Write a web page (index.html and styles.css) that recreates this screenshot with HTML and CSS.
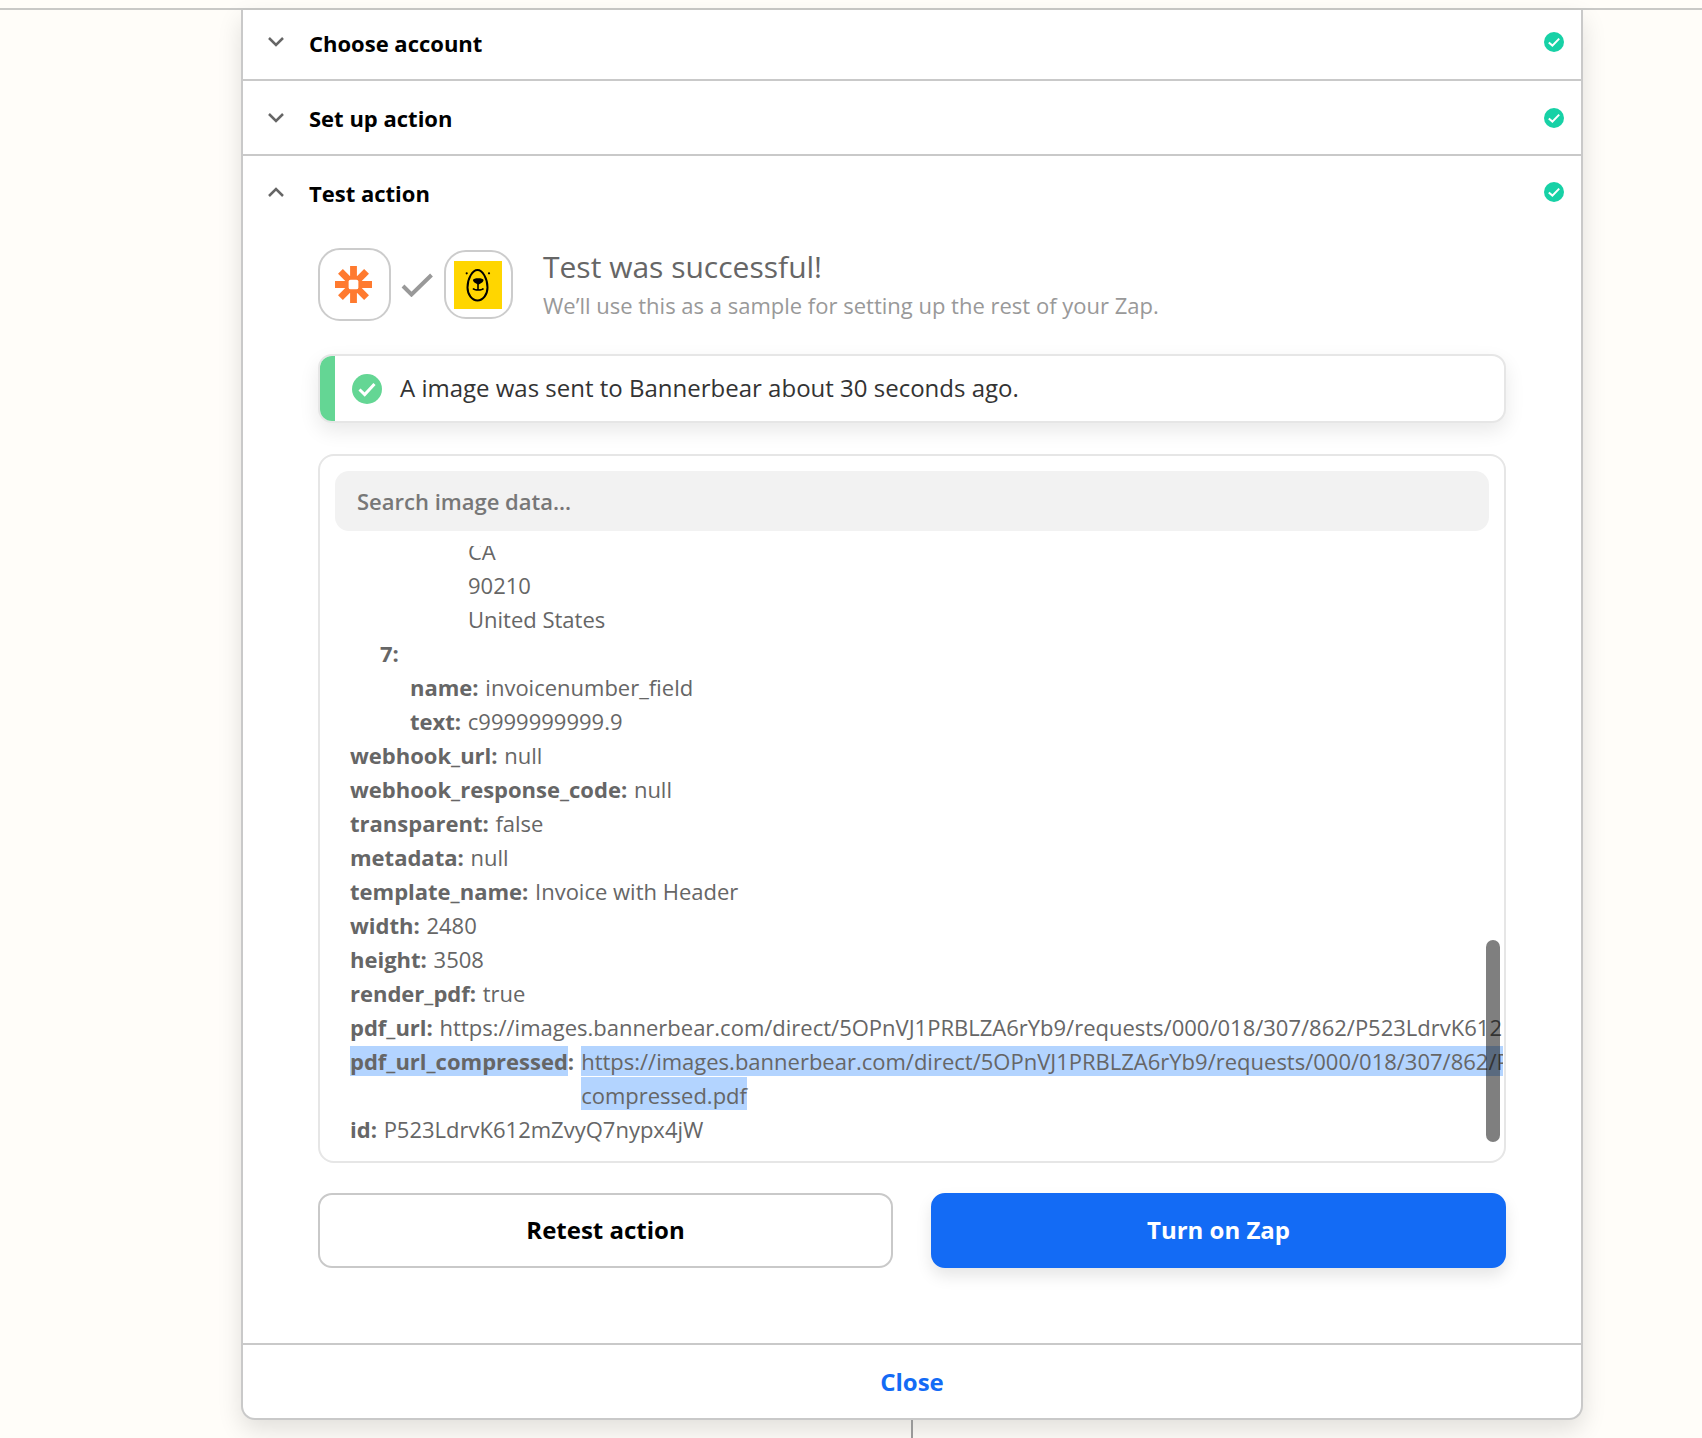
FILE: index.html
```html
<!DOCTYPE html>
<html lang="en">
<head>
<meta charset="utf-8">
<title>Test action</title>
<link rel="stylesheet" href="styles.css">
</head>
<body>
<div class="topbar"></div>
<div class="stem"></div>
<main class="panel">
  <header class="step step-first">
    <svg class="chev" viewBox="0 0 18 12"><path d="M2 2l7 7 7-7"/></svg>
    <h2 class="step-title">Choose account</h2>
    <svg class="ok" viewBox="0 0 20 20"><circle cx="10" cy="10" r="10"/><path d="M4.800 10.400l3.600 3.200 6.800-7"/></svg>
  </header>
  <header class="step step-second">
    <svg class="chev" viewBox="0 0 18 12"><path d="M2 2l7 7 7-7"/></svg>
    <h2 class="step-title">Set up action</h2>
    <svg class="ok" viewBox="0 0 20 20"><circle cx="10" cy="10" r="10"/><path d="M4.800 10.400l3.600 3.200 6.800-7"/></svg>
  </header>
  <section class="open-step">
    <div class="step step-open">
      <svg class="chev" viewBox="0 0 18 12"><path d="M2 10l7-7 7 7"/></svg>
      <h2 class="step-title">Test action</h2>
      <svg class="ok" viewBox="0 0 20 20"><circle cx="10" cy="10" r="10"/><path d="M4.800 10.400l3.600 3.200 6.800-7"/></svg>
    </div>
    <div class="content">
      <div class="summary">
        <div class="tile tile-zap">
          <svg class="zap" viewBox="0 0 38 38">
            <path d="M19 0v38M0 19h38M5.600 5.600l26.800 26.800M32.400 5.600L5.600 32.400"/>
            <rect x="14" y="14" width="10" height="10" rx="2"/>
          </svg>
        </div>
        <svg class="link-check" viewBox="0 0 32 24"><path d="M2 13l8.500 8.500L30.500 2"/></svg>
        <div class="tile tile-bear">
          <svg class="bear" viewBox="0 0 48 48">
            <rect width="48" height="48"/>
            <path class="bear-line" d="M23.500 9c-5 0-10 8.500-10 17.500 0 7 4.500 13 10 13s10-6 10-13c0-9-5-17.500-10-17.500z"/>
            <path class="bear-fill" d="M19 19c0-2.200 10.500-2.200 10.500 0 0 2.200-3 3.800-5.200 4.500-2.100-.7-5.300-2.300-5.300-4.500z"/>
            <path class="bear-thin" d="M24 23v5.500M19 27.500c1.500 2 9 2 10.500 0"/>
            <circle class="bear-fill" cx="12.700" cy="12.300" r="1.100"/>
            <circle class="bear-fill" cx="35" cy="12.300" r="1.100"/>
          </svg>
        </div>
        <div class="summary-text">
          <h3 class="summary-title">Test was successful!</h3>
          <p class="summary-sub">We’ll use this as a sample for setting up the rest of your Zap.</p>
        </div>
      </div>

      <div class="alert">
        <span class="alert-bar"></span>
        <svg class="alert-icon" viewBox="0 0 30 30"><circle cx="15" cy="15" r="15"/><path d="M7.500 15.500l5.200 5L22.500 10"/></svg>
        <span class="alert-text">A image was sent to Bannerbear about 30 seconds ago.</span>
      </div>

      <div class="data-box">
        <div class="search">Search image data...</div>
        <div class="tree-clip">
          <div class="tree">
            <div class="row ind-3">CA</div>
            <div class="row ind-3">90210</div>
            <div class="row ind-3">United States</div>
            <div class="row ind-1"><b>7:</b></div>
            <div class="row ind-2"><b>name:</b> invoicenumber_field</div>
            <div class="row ind-2"><b>text:</b> c9999999999.9</div>
            <div class="row"><b>webhook_url:</b> null</div>
            <div class="row"><b>webhook_response_code:</b> null</div>
            <div class="row"><b>transparent:</b> false</div>
            <div class="row"><b>metadata:</b> null</div>
            <div class="row"><b>template_name:</b> Invoice with Header</div>
            <div class="row"><b>width:</b> 2480</div>
            <div class="row"><b>height:</b> 3508</div>
            <div class="row"><b>render_pdf:</b> true</div>
            <div class="row"><b>pdf_url:</b> https://images.bannerbear.com/direct/5OPnVJ1PRBLZA6rYb9/requests/000/018/307/862/P523LdrvK612mZvyQ7nypx4jW/original.pdf</div>
            <div class="row row-split">
              <b class="key-sel"><span class="sel">pdf_url_compressed</span>:</b>
              <div class="value">
                <div class="line"><span class="sel">https://images.bannerbear.com/direct/5OPnVJ1PRBLZA6rYb9/requests/000/018/307/862/P523LdrvK612mZvyQ7nypx4jW/</span></div>
                <div class="line"><span class="sel sel-tail">compressed.pdf</span></div>
              </div>
            </div>
            <div class="row"><b>id:</b> P523LdrvK612mZvyQ7nypx4jW</div>
          </div>
          <div class="thumb"></div>
        </div>
      </div>

      <div class="actions">
        <button class="btn btn-ghost">Retest action</button>
        <button class="btn btn-primary">Turn on Zap</button>
      </div>
    </div>
  </section>
  <footer class="foot"><a class="close">Close</a></footer>
</main>
</body>
</html>
```

FILE: styles.css
```css
* { box-sizing: border-box; }
html, body { margin: 0; height: 1438px; overflow: hidden; }
body {
  background: #fffdf9;
  font-family: "Open Sans", "Noto Sans", sans-serif;
  font-size: 22px;
  line-height: 34px;
  color: #666;
  position: relative;
}
h2, h3, p { margin: 0; }

.topbar { height: 10px; border-bottom: 2px solid #c9c9c7; }
.stem { position: absolute; z-index: 1; left: 911px; top: 1420px; width: 2px; height: 18px; background: #999; }

.panel {
  width: 1342px;
  height: 1410px;
  margin-left: 241px;
  display: flex;
  flex-direction: column;
  background: #fff;
  border: 2px solid #c9c9c9;
  border-top: 0;
  border-radius: 0 0 14px 14px;
  box-shadow: 0 10px 24px rgba(0, 0, 0, .12);
  position: relative;
}

.step {
  display: flex;
  align-items: flex-start;
  padding: 20px 17px 19px 24px;
  border-bottom: 2px solid #c9c9c9;
}
.step-first { padding-top: 16px; padding-bottom: 19px; }
.step-open { border-bottom: 0; padding-bottom: 0; }
.chev { width: 18px; height: 12px; margin-top: 10px; margin-right: 24px; fill: none; stroke: #666; stroke-width: 2.500; }
.step-title { flex: 1; font-size: 22px; line-height: 34px; font-weight: 700; color: #000; }
.ok { width: 20px; height: 20px; margin-top: 6px; }
.step-second .chev { margin-top: 11px; }
.step-second .ok { margin-top: 7px; }
.ok circle { fill: #17d1a6; }
.ok path { fill: none; stroke: #fff; stroke-width: 2; }

.open-step { flex: 1; display: flex; flex-direction: column; }
.content { flex: 1; padding: 38px 75px 0; }

.summary { display: flex; align-items: center; height: 73px; }
.tile { display: flex; align-items: center; justify-content: center; background: #fff; border: 2px solid #ccc; }
.tile-zap { width: 73px; height: 73px; border-radius: 22px; }
.tile-bear { width: 69px; height: 69px; border-radius: 22px; }
.zap { width: 37px; height: 37px; margin-right: 2px; }
.zap path { fill: none; stroke: #ff7a2f; stroke-width: 7; }
.zap rect { fill: #fff; }
.link-check { width: 32px; height: 24px; margin: 0 11px 0 10px; fill: none; stroke: #999; stroke-width: 4; }
.bear { width: 48px; height: 48px; margin-right: 2px; }
.bear rect { fill: #ffd600; }
.bear-line { fill: none; stroke: #000; stroke-width: 2; }
.bear-thin { fill: none; stroke: #000; stroke-width: 1.600; }
.bear-fill { fill: #000; }
.summary-text { margin-left: 30px; }
.summary-title { font-size: 30px; line-height: 40px; font-weight: 400; color: #666; margin-top: -1px; }
.summary-sub { font-size: 22px; line-height: 34px; color: #999; margin-top: 1px; }

.alert {
  display: flex;
  align-items: center;
  height: 69px;
  margin-top: 33px;
  background: #fff;
  border: 2px solid #e6e6e6;
  border-radius: 14px;
  box-shadow: 0 8px 20px rgba(0, 0, 0, .09);
}
.alert-bar { align-self: stretch; width: 15px; margin-right: 17px; background: #64d694; border-radius: 12px 0 0 12px; }
.alert-icon { width: 30px; height: 30px; margin-right: 18px; }
.alert-icon circle { fill: #64d694; }
.alert-icon path { fill: none; stroke: #fff; stroke-width: 3; }
.alert-text { font-size: 24px; color: #333; margin-top: -2px; }

.data-box {
  height: 709px;
  margin-top: 31px;
  padding: 15px 15px 0;
  border: 2px solid #e6e6e6;
  border-radius: 16px;
}
.search {
  height: 60px;
  padding-left: 22px;
  background: #f2f2f2;
  border-radius: 14px;
  font-size: 22px;
  font-weight: 600;
  line-height: 60px;
  color: #777;
}
.tree-clip {
  position: relative;
  height: 601px;
  width: 1183px;
  margin-top: 15px;
  margin-left: -15px;
  overflow: hidden;
}
.tree { margin-top: -12px; padding-left: 30px; }
.row { white-space: nowrap; }
.ind-1 { padding-left: 30px; }
.ind-2 { padding-left: 60px; }
.ind-3 { padding-left: 118px; }
b { font-weight: 700; margin-right: 1px; }
.row-split { display: flex; align-items: flex-start; gap: 7px; }
.key-sel { margin-right: 0; }
.sel { background: #b3d4ff; }
.sel-tail { padding-top: 3px; }
.thumb {
  position: absolute;
  right: 3px;
  top: 394px;
  width: 14px;
  height: 202px;
  background: rgba(0, 0, 0, .5);
  border-radius: 7px;
}

.actions { display: flex; gap: 38px; margin-top: 30px; }
.btn {
  flex: 1;
  height: 75px;
  padding: 0 0 2px;
  border-radius: 14px;
  font: 700 24px/34px "Open Sans", sans-serif;
}
.btn-ghost { background: #fff; border: 2px solid #c9c9c9; color: #000; }
.btn-primary { background: #136bf5; border: 2px solid #136bf5; color: #fff; box-shadow: 0 8px 16px rgba(0, 0, 0, .1); }

.foot { display: flex; align-items: center; justify-content: center; height: 75px; border-top: 2px solid #c9c9c9; }
.close { font-size: 24px; font-weight: 700; color: #136bf5; }
```
